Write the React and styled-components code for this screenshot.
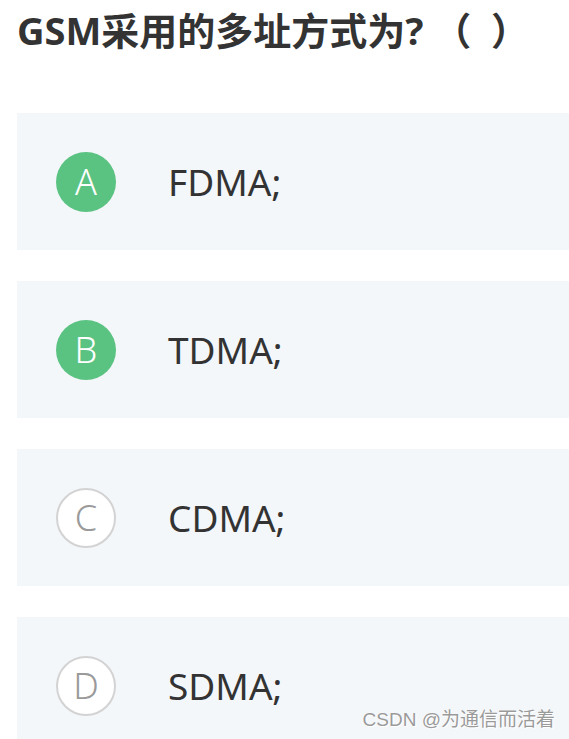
import React from 'react';
import styled, { createGlobalStyle } from 'styled-components';

const GlobalStyle = createGlobalStyle`
  html, body {
    margin: 0;
    padding: 0;
    background: #fff;
  }
  body {
    font-family: "Noto Sans", "Noto Sans CJK SC", sans-serif;
  }
`;

const Page = styled.div`
  position: relative;
  width: 569px;
  height: 739px;
  overflow: hidden;
  padding-left: 17px;
  box-sizing: border-box;
`;

const Title = styled.h1`
  margin: 0;
  padding-top: 6px;
  height: 113px;
  box-sizing: border-box;
  font-size: 38px;
  line-height: 48px;
  font-weight: 700;
  color: #333;
  white-space: pre;
`;

const Options = styled.div`
  display: flex;
  flex-direction: column;
  gap: 31px;
`;

const Option = styled.div`
  display: flex;
  align-items: center;
  height: 137px;
  background: #f4f7fa;
  padding-left: 39px;
`;

const Badge = styled.div`
  width: 60px;
  height: 60px;
  border-radius: 50%;
  box-sizing: border-box;
  display: flex;
  align-items: center;
  justify-content: center;
  font-size: 36px;
  font-weight: 300;
  flex-shrink: 0;
  background: ${(p) => (p.$on ? '#5ac382' : '#fff')};
  color: ${(p) => (p.$on ? '#fff' : '#9a9a9a')};
  border: ${(p) => (p.$on ? 'none' : '2px solid #d3d3d3')};
`;

const Label = styled.span`
  margin-left: 52px;
  font-size: 37px;
  color: #333;
`;

const Watermark = styled.div`
  position: absolute;
  right: 14px;
  bottom: 8px;
  font-family: "Liberation Sans", "Noto Sans CJK SC", sans-serif;
  font-size: 19px;
  color: #9a9a9a;
  text-shadow: 0 0 1px #fff, 1px 1px 0 #fff;
`;

const options = [
  { key: 'A', text: 'FDMA;', on: true },
  { key: 'B', text: 'TDMA;', on: true },
  { key: 'C', text: 'CDMA;', on: false },
  { key: 'D', text: 'SDMA;', on: false },
];

export default function App() {
  return (
    <>
      <GlobalStyle />
      <Page>
        <Title>GSM采用的多址方式为? （  ）</Title>
        <Options>
          {options.map((o) => (
            <Option key={o.key}>
              <Badge $on={o.on}>{o.key}</Badge>
              <Label>{o.text}</Label>
            </Option>
          ))}
        </Options>
        <Watermark>CSDN @为通信而活着</Watermark>
      </Page>
    </>
  );
}
